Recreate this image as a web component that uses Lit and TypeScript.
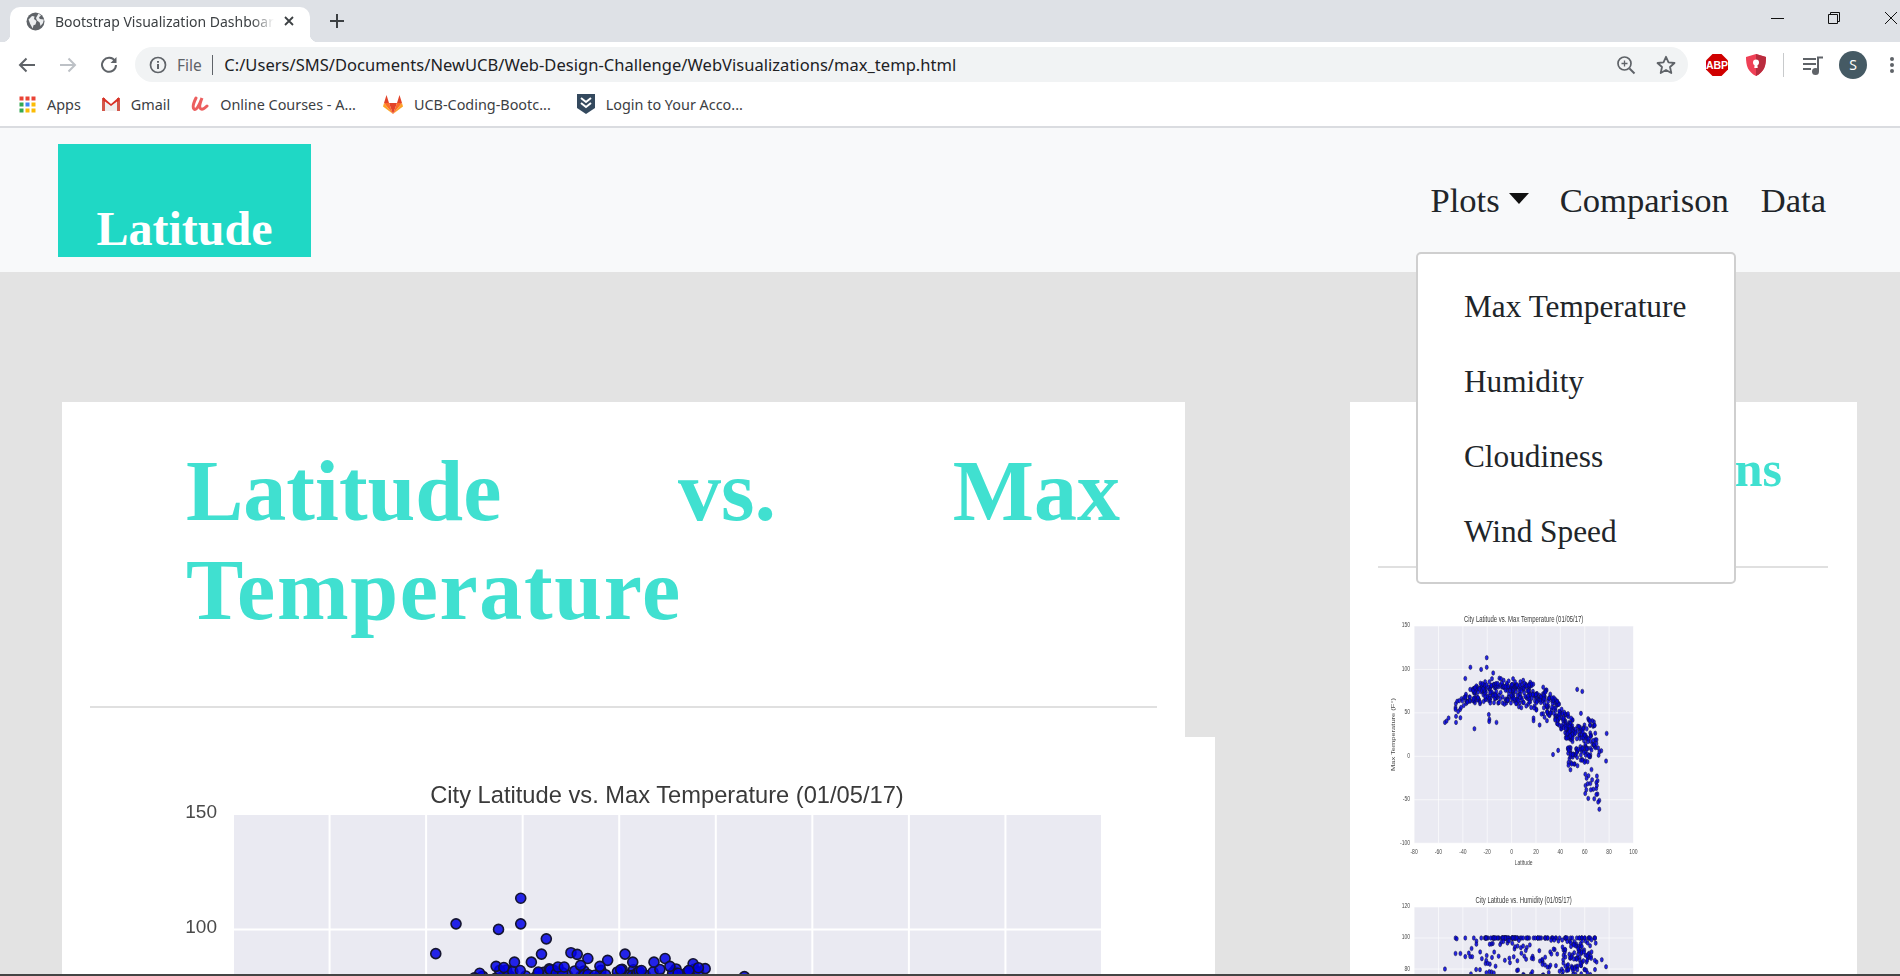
import { LitElement, html, svg, css } from "lit";
import { customElement } from "lit/decorators.js";

type P = [number, number];

function rng(seed: number) {
  return () => {
    seed |= 0;
    seed = (seed + 0x6d2b79f5) | 0;
    let t = Math.imul(seed ^ (seed >>> 15), 1 | seed);
    t = (t + Math.imul(t ^ (t >>> 7), 61 | t)) ^ t;
    return ((t ^ (t >>> 14)) >>> 0) / 4294967296;
  };
}

const tempOutliers: P[] = [
  [-20.4, 113.5], [-33.8, 102.4], [-25, 100], [-20.4, 102.4], [-15.1, 95.9], [-38, 89.5], [53.8, 77], [58, 74.7], [56.9, 49.4],
  [-54.7, 39], [-53.3, 40.6], [-51.7, 44], [-45.6, 46], [-45.6, 39], [-42, 44.4], [-30.5, 31.7], [-18.7, 48], [-18.2, 42.5],
  [-18.4, 40], [-12.4, 39], [34, 2], [38.2, 6.8], [48.3, -15.5], [78, 26.3], [77.5, -5.5], [73.6, 6.4], [72, 5], [72, -50.8],
  [72, -61], [62.9, -48.5], [61.3, -38.6], [65, -38.6], [70, -22.8], [70, -33.6], [69.5, -44], [67.8, -49], [71, -52.7],
  [-16.1, 89.3], [-10, 89.9], [-8.7, 89.2], [-6.5, 87.4], [1.2, 89.3], [9.5, 87.4], [7.2, 85.8], [15.3, 85.1], [17.8, 83],
  [10.5, 84], [2.8, 85.8], [-2.4, 86.6], [-4, 84], [-12.7, 83.7], [-11.4, 83.7], [-18.2, 85.8], [-21.7, 85.8], [-25.5, 84],
  [-23.9, 83.5], [-28.9, 81], [-20.5, 82.2], [-8, 84.4], [0.3, 82.5], [4.6, 82.2], [14.4, 82.2], [16.4, 83.4], [12.2, 81],
  [-46, 56], [-46, 54], [-43, 64], [-38, 68], [-34, 77], [-30, 79],
  [6, 57], [8, 56], [10, 62], [12, 58], [18, 44], [18, 41], [23, 36], [27, 45], [29, 41],
];

function tempData(): P[] {
  const r = rng(17);
  const u = (a: number, b: number) => a + (b - a) * r();
  const pts: P[] = [];
  for (let i = 0; i < 190; i++) {
    const lat = u(-32, 26);
    const slip = lat > 12 ? (lat - 12) * 0.9 : 0;
    pts.push([lat, Math.min(80, 80.5 - slip - Math.pow(r(), 1.2) * 21)]);
  }
  for (let i = 0; i < 45; i++) pts.push([u(-27, 17), u(79.5, 83)]);
  for (let i = 0; i < 30; i++) {
    const lat = u(-46, -30);
    pts.push([lat, 56 + (lat + 46) * 1.1 + u(-7, 7)]);
  }
  for (let i = 0; i < 120; i++) {
    const lat = u(24, 50);
    pts.push([lat, 72 - (lat - 24) * 1.55 + u(-15, 13)]);
  }
  for (let i = 0; i < 55; i++) pts.push([u(44, 62), u(20, 36)]);
  for (let i = 0; i < 40; i++) pts.push([u(46, 62), u(-13, 12)]);
  for (let i = 0; i < 45; i++) pts.push([u(58, 72), u(-8, 29)]);
  for (let i = 0; i < 14; i++) pts.push([u(60, 71), u(-45, -15)]);
  for (let i = 0; i < 10; i++) pts.push([u(62, 70), u(34, 44)]);
  return pts.concat(tempOutliers);
}

function humidityData(): P[] {
  const r = rng(41);
  const u = (a: number, b: number) => a + (b - a) * r();
  const pts: P[] = [[-54.7, 80], [-46, 90], [-42, 90], [77.5, 81.5], [74, 86], [-46, 100], [-45, 99.5], [-38, 88], [-34, 88], [-38, 100], [-31, 100]];
  for (let i = 0; i < 80; i++) pts.push([u(-25, 72), 100]);
  for (let i = 0; i < 25; i++) pts.push([u(-22, 5), 100]);
  for (let i = 0; i < 180; i++) {
    const lat = i % 3 === 0 ? u(40, 66) : u(-36, 70);
    pts.push([lat, u(76, 99)]);
  }
  return pts;
}

interface ChartCfg {
  title: string;
  yLabel: string;
  yMin: number;
  yMax: number;
  yStep: number;
  pts: P[];
}

const PX0 = 143, PX1 = 1012, PY0 = 77, PY1 = 654;

function chart(cfg: ChartCfg, cls: string, radius: number) {
  const x = (lat: number) => PX0 + ((lat + 80) / 180) * (PX1 - PX0);
  const y = (v: number) => PY1 - ((v - cfg.yMin) / (cfg.yMax - cfg.yMin)) * (PY1 - PY0);
  const xt: number[] = [];
  for (let v = -80; v <= 100; v += 20) xt.push(v);
  const yt: number[] = [];
  for (let v = cfg.yMin; v <= cfg.yMax; v += cfg.yStep) yt.push(v);
  return html`<svg class="chart ${cls}" viewBox="0 0 1125 720" preserveAspectRatio="none">
    <rect x=${PX0} y=${PY0} width=${PX1 - PX0} height=${PY1 - PY0} fill="#eaeaf2"></rect>
    ${xt.map((v) => svg`<line x1=${x(v)} x2=${x(v)} y1=${PY0} y2=${PY1} stroke="#fff" stroke-width="2"></line>
      <text x=${x(v)} y="683" text-anchor="middle" class="tick">${v < 0 ? "-" + -v : v}</text>`)}
    ${yt.map((v) => svg`<line x1=${PX0} x2=${PX1} y1=${y(v)} y2=${y(v)} stroke="#fff" stroke-width="2"></line>
      <text x="127" y=${y(v) + 4} text-anchor="end" class="tick">${v < 0 ? "-" + -v : v}</text>`)}
    ${cfg.pts.map((p) => svg`<circle cx=${x(p[0])} cy=${y(p[1])} r=${radius} fill="#0000e6" fill-opacity="0.85" stroke="#151530" stroke-width="1.6"></circle>`)}
    <text x="577" y="66" text-anchor="middle" class="ctitle">${cfg.title}</text>
    <text x="577" y="712" text-anchor="middle" class="tick">Latitude</text>
    <text transform="translate(68 ${(PY0 + PY1) / 2}) rotate(-90)" text-anchor="middle" class="tick">${cfg.yLabel}</text>
  </svg>`;
}

const tempCfg: ChartCfg = {
  title: "City Latitude vs. Max Temperature (01/05/17)",
  yLabel: "Max Temperature (F°)",
  yMin: -100, yMax: 150, yStep: 50,
  pts: tempData(),
};
const humCfg: ChartCfg = {
  title: "City Latitude vs. Humidity (01/05/17)",
  yLabel: "Humidity (%)",
  yMin: -20, yMax: 120, yStep: 20,
  pts: humidityData(),
};

const appColors = ["#ea4335", "#ea4335", "#ea4335", "#34a853", "#4285f4", "#fbbc05", "#34a853", "#fbbc05", "#fbbc05"];

@customElement("app-root")
export class AppRoot extends LitElement {
  static styles = css`
    :host { display: flex; flex-direction: column; height: 976px; overflow: hidden; background: #e3e3e3; position: relative; font-family: "Noto Sans", sans-serif; }
    svg { display: block; flex: none; }

    .tabstrip { height: 42px; flex: none; background: #dee1e6; display: flex; align-items: flex-end; padding-left: 10px; }
    .tab { position: relative; width: 300px; height: 35px; background: #fff; border-radius: 10px 10px 0 0; display: flex; align-items: center; box-sizing: border-box; padding: 0 13px 7px 16px; }
    .tab::before, .tab::after { content: ""; position: absolute; bottom: 0; width: 8px; height: 8px; }
    .tab::before { left: -8px; background: radial-gradient(circle at 0 0, transparent 8px, #fff 8.5px); }
    .tab::after { right: -8px; background: radial-gradient(circle at 100% 0, transparent 8px, #fff 8.5px); }
    .tab-title { margin-left: 10px; width: 219px; white-space: nowrap; overflow: hidden; font-size: 14px; color: #3c4043; -webkit-mask-image: linear-gradient(90deg, #000 90%, transparent); mask-image: linear-gradient(90deg, #000 90%, transparent); }
    .tab-close { margin-left: 9px; }
    .newtab { margin: 0 0 13px 19px; align-self: flex-end; }
    .winctl { margin-left: auto; display: flex; align-self: flex-start; padding: 11px 2px 0 0; gap: 43px; }

    .toolbar { height: 40px; flex: none; background: #fff; display: flex; align-items: flex-start; }
    .nav-btn { width: 41px; height: 35px; margin-top: 5px; display: flex; align-items: center; justify-content: center; }
    .nav-btns { display: flex; padding-left: 6px; }
    .omni { margin: 5px 0 0 6px; width: 1553px; height: 35px; border-radius: 18px; background: #f1f3f4; display: flex; align-items: center; box-sizing: border-box; padding: 0 0 0 14px; }
    .file { margin-left: 10px; font-size: 15.5px; color: #5f6368; }
    .omni-sep { width: 1.5px; height: 20px; margin: 0 11px 0 10px; background: #5f6368; }
    .url { font-size: 16.5px; color: #202124; white-space: nowrap; letter-spacing: 0.03px; }
    .omni-end { margin-left: auto; display: flex; align-items: center; gap: 20px; padding-right: 12px; }
    .ext { display: flex; align-items: center; margin: 5px 0 0 18px; height: 35px; }
    .ext-shield { margin-left: 18px; }
    .ext-sep { width: 1px; height: 24px; background: #c8cacc; margin: 0 18px 0 17px; }
    .avatar { width: 28px; height: 28px; border-radius: 50%; background: #455a64; color: #fff; display: flex; align-items: center; justify-content: center; font-size: 14px; margin: 0 22px 0 15px; }

    .bookmarks { height: 44px; flex: none; background: #fff; border-bottom: 2px solid #dadce0; display: flex; align-items: center; padding-left: 19px; font-size: 14.4px; color: #3c4043; }
    .bm { display: flex; align-items: center; gap: 11px; margin-right: 21px; white-space: nowrap; }
    .bm.online { margin-right: 27px; }
    .bm.ucb { margin-right: 26px; }

    .page { flex: 1; min-height: 0; position: relative; overflow: hidden; font-family: "Liberation Serif", serif; color: #212529; }
    .navbar { height: 144px; background: #f8f9fa; display: flex; align-items: center; justify-content: space-between; padding: 0 74px 0 58px; }
    .brand { width: 253px; height: 113px; box-sizing: border-box; background: #1fd8c5; display: flex; align-items: flex-end; justify-content: center; padding-bottom: 4px; color: #fff; font-weight: 700; font-size: 48px; line-height: 48px; }
    .menu { display: flex; font-size: 34.6px; line-height: 40px; }
    .plots { display: flex; align-items: center; margin-right: 31px; }
    .caret { width: 0; height: 0; margin: 0 0 0 9px; border-left: 10px solid transparent; border-right: 10px solid transparent; border-top: 11px solid #111; transform: translateY(-2px); }
    .comparison { margin-right: 32px; }

    .dropdown { position: absolute; left: 1416px; top: 124px; width: 320px; box-sizing: border-box; padding: 15px 0 13px 46px; background: #fff; border: 2px solid #cfcfcf; border-radius: 5px; font-size: 31.3px; line-height: 75px; z-index: 2; }

    .content { display: flex; padding: 130px 0 0 62px; }
    .card { background: #fff; box-sizing: border-box; }
    .left { width: 1123px; height: 640px; padding: 40px 28px 0; }
    .right { width: 507px; height: 640px; margin-left: 165px; padding: 37px 29px 0 28px; }
    h1 { margin: 0; color: #40e0d0; font-weight: 700; }
    .h-big { margin: 0 37px 0 96px; font-size: 86px; line-height: 99px; text-align: justify; height: 264px; }
    .wide { letter-spacing: 1.65px; }
    .h-small { font-size: 50px; line-height: 60px; text-align: right; margin-right: 46px; height: 127px; }
    .rule { height: 2px; background: #e0e0e0; }
    .left .rule { margin-bottom: 29px; }
    .right .rule { margin-bottom: 29px; }
    .charts { display: flex; flex-direction: column; gap: 10px; }
    .chart { background: #fff; }
    .chart.big { width: 1125px; height: 720px; filter: blur(0.35px); }
    .chart.small { width: 284px; height: 271px; filter: blur(0.45px); }
    .tick { font: 19px "Liberation Sans", sans-serif; fill: #4a4a4a; }
    .ctitle { font: 23.7px "Liberation Sans", sans-serif; fill: #3a3a3a; }
    .small .tick { font-size: 20px; }

    .taskbar { height: 2px; flex: none; background: #444; }
  `;

  private globe() {
    return html`<svg width="19" height="19" viewBox="0 0 19 19"><circle cx="9.5" cy="9.5" r="9" fill="#5f6368"></circle>
      <path d="M2.500 7.500L6 4l2.500.5L8 7l2.500 2-1 3.500-2 .8-.8 3.200-2.500-4.500zM12.500 1.500l2.500 2-2 1.800.8 1.700 4 .5-.8 3.500-2.500 3-.8-3.500-2.700-2-1-2.500z" fill="#eceef0"></path></svg>`;
  }

  render() {
    return html`
      <div class="tabstrip">
        <div class="tab">
          ${this.globe()}
          <div class="tab-title">Bootstrap Visualization Dashboard</div>
          <svg class="tab-close" width="12" height="12" viewBox="0 0 12 12"><path d="M2 2l8 8M10 2l-8 8" stroke="#3c4043" stroke-width="1.8"></path></svg>
        </div>
        <svg class="newtab" width="16" height="16" viewBox="0 0 16 16"><path d="M8 1v14M1 8h14" stroke="#3c4043" stroke-width="2"></path></svg>
        <div class="winctl">
          <svg width="14" height="14" viewBox="0 0 14 14"><path d="M1 7.5h13" stroke="#111" stroke-width="1"></path></svg>
          <svg width="14" height="14" viewBox="0 0 14 14"><path d="M1.5 3.5h9v9h-9zM3.5 3.5v-2h9v9h-2" fill="none" stroke="#111" stroke-width="1"></path></svg>
          <svg width="14" height="14" viewBox="0 0 14 14"><path d="M1 1l12 12M13 1L1 13" stroke="#111" stroke-width="1"></path></svg>
        </div>
      </div>

      <div class="toolbar">
        <div class="nav-btns">
          <div class="nav-btn"><svg width="18" height="16" viewBox="0 0 18 16"><path d="M17 8H2M8.5 1.5L2 8l6.5 6.5" fill="none" stroke="#5f6368" stroke-width="2"></path></svg></div>
          <div class="nav-btn"><svg width="18" height="16" viewBox="0 0 18 16"><path d="M1 8h15M9.500 1.500L16 8l-6.500 6.500" fill="none" stroke="#bdc1c6" stroke-width="2"></path></svg></div>
          <div class="nav-btn"><svg width="18" height="18" viewBox="0 0 18 18"><path d="M15 5.200A7 7 0 1 0 16 9" fill="none" stroke="#5f6368" stroke-width="2"></path><path d="M16.500 1v6h-6z" fill="#5f6368"></path></svg></div>
        </div>
        <div class="omni">
          <svg width="18" height="18" viewBox="0 0 18 18"><circle cx="9" cy="9" r="7.500" fill="none" stroke="#5f6368" stroke-width="1.700"></circle><path d="M9 8v5M9 5v1.800" stroke="#5f6368" stroke-width="2"></path></svg>
          <span class="file">File</span>
          <span class="omni-sep"></span>
          <span class="url">C:/Users/SMS/Documents/NewUCB/Web-Design-Challenge/WebVisualizations/max_temp.html</span>
          <div class="omni-end">
            <svg width="20" height="20" viewBox="0 0 20 20"><circle cx="8.500" cy="8.500" r="6.500" fill="none" stroke="#5f6368" stroke-width="1.700"></circle><path d="M13.500 13.500l5 5" stroke="#5f6368" stroke-width="2"></path><path d="M8.500 5.500v6M5.500 8.500h6" stroke="#5f6368" stroke-width="1.300"></path></svg>
            <svg width="20" height="20" viewBox="0 0 20 20"><path d="M10 1.800l2.500 5.600 6 .6-4.500 4 1.300 6L10 15l-5.300 3 1.300-6-4.500-4 6-.6z" fill="none" stroke="#5f6368" stroke-width="1.800" stroke-linejoin="round"></path></svg>
          </div>
        </div>
        <div class="ext">
          <svg width="22" height="22" viewBox="0 0 22 22"><path d="M6.500 0h9L22 6.500v9L15.500 22h-9L0 15.500v-9z" fill="#d00000"></path><text x="11" y="15.200" text-anchor="middle" fill="#fff" font-family="Liberation Sans" font-weight="700" font-size="10.500">ABP</text></svg>
          <svg class="ext-shield" width="20" height="22" viewBox="0 0 20 22"><path d="M10 0l10 3c0 9-2 15-10 19C2 18 0 12 0 3z" fill="#ef4056"></path><path d="M10 0l10 3c0 9-2 15-10 19z" fill="#b92c3e"></path><circle cx="10" cy="8.500" r="3" fill="#fff"></circle><path d="M8.800 9h2.400l.5 5h-3.400z" fill="#fff"></path></svg>
          <span class="ext-sep"></span>
          <svg width="22" height="22" viewBox="0 0 22 22"><path d="M1 5h13M1 10h13M1 15h8" stroke="#5f6368" stroke-width="2"></path><path d="M16 17V3.500h5" fill="none" stroke="#5f6368" stroke-width="2"></path><circle cx="13.500" cy="17.500" r="3.500" fill="#5f6368"></circle></svg>
          <div class="avatar">S</div>
          <svg width="6" height="18" viewBox="0 0 6 18"><circle cx="3" cy="3" r="2" fill="#5f6368"></circle><circle cx="3" cy="9" r="2" fill="#5f6368"></circle><circle cx="3" cy="15" r="2" fill="#5f6368"></circle></svg>
        </div>
      </div>

      <div class="bookmarks">
        <div class="bm">
          <svg width="17" height="17" viewBox="0 0 17 17">${appColors.map((c, i) => svg`<rect x=${(i % 3) * 6 + 0.5} y=${Math.floor(i / 3) * 6 + 0.5} width="4" height="4" fill=${c}></rect>`)}</svg>
          <span>Apps</span>
        </div>
        <div class="bm">
          <svg width="18" height="14" viewBox="0 0 18 14"><path d="M0 1h3v13H0zM15 1h3v13h-3z" fill="#d3574a"></path><path d="M1 0l8 7 8-7v3.500L9 10 1 3.500z" fill="#d93025"></path><path d="M3 4.500L9 9l6-4.500V14H3z" fill="#efefef"></path></svg>
          <span>Gmail</span>
        </div>
        <div class="bm online">
          <svg width="18" height="18" viewBox="0 0 18 18"><path d="M5 3C3 7 1 12 3 14c2 2 5-3 8-11-2 5-3 10-1 11 1.500.7 4-1 6-3" fill="none" stroke="#ec5f5f" stroke-width="3" stroke-linecap="round"></path></svg>
          <span>Online Courses - A...</span>
        </div>
        <div class="bm ucb">
          <svg width="20" height="19" viewBox="0 0 20 19"><path d="M10 19L0 11.500 1 8l9 11z" fill="#fca326"></path><path d="M10 19l10-7.500L19 8l-9 11z" fill="#fca326"></path><path d="M10 19L1 8h5z" fill="#fc6d26"></path><path d="M10 19l9-11h-5z" fill="#fc6d26"></path><path d="M10 19L6 8h8z" fill="#e24329"></path><path d="M1 8l2.500-8L6 8zM19 8l-2.500-8L14 8z" fill="#e24329"></path></svg>
          <span>UCB-Coding-Bootc...</span>
        </div>
        <div class="bm">
          <svg width="18" height="20" viewBox="0 0 18 20"><path d="M0 0h18v14l-9 6-9-6z" fill="#34495e"></path><path d="M4 4l5 4 5-4M4 9l5 4 5-4" fill="none" stroke="#fff" stroke-width="2"></path></svg>
          <span>Login to Your Acco...</span>
        </div>
      </div>

      <div class="page">
        <div class="navbar">
          <div class="brand">Latitude</div>
          <div class="menu">
            <div class="plots"><span>Plots</span><span class="caret"></span></div>
            <div class="comparison">Comparison</div>
            <div>Data</div>
          </div>
        </div>
        <div class="dropdown">
          <div>Max Temperature</div>
          <div>Humidity</div>
          <div>Cloudiness</div>
          <div>Wind Speed</div>
        </div>
        <div class="content">
          <div class="card left">
            <h1 class="h-big">Latitude vs. Max <span class="wide">Temperature</span></h1>
            <div class="rule"></div>
            ${chart(tempCfg, "big", 5)}
          </div>
          <div class="card right">
            <h1 class="h-small">Visualizations</h1>
            <div class="rule"></div>
            <div class="charts">
              ${chart(tempCfg, "small", 6)}
              ${chart(humCfg, "small", 6)}
            </div>
          </div>
        </div>
      </div>
      <div class="taskbar"></div>
    `;
  }
}
